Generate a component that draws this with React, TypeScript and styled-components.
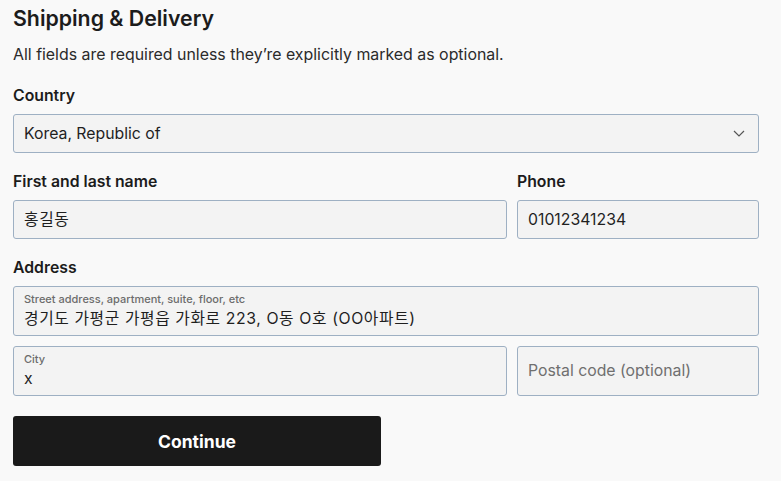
import React from "react";
import styled, { createGlobalStyle } from "styled-components";

const GlobalStyle = createGlobalStyle`
  html, body {
    margin: 0;
    padding: 0;
    background: #f9f9f9;
  }
  body {
    font-family: Inter, "Noto Sans CJK KR", "Noto Sans", sans-serif;
    color: #1c1c1c;
  }
`;

const Page = styled.div`
  width: 746px;
  padding: 6px 0 0 13px;
`;

const Title = styled.h1`
  margin: 0;
  font-size: 21.3px;
  line-height: 24px;
  font-weight: 600;
`;

const Note = styled.p`
  margin: 15px 0 0;
  font-size: 15.9px;
  line-height: 20px;
  color: #2b2b2b;
`;

const Section = styled.div<{ $top: number }>`
  margin-top: ${(p) => p.$top}px;
`;

const Row = styled.div`
  display: grid;
  grid-template-columns: 494px 242px;
  column-gap: 10px;
`;

const Label = styled.div`
  font-size: 15.8px;
  line-height: 20px;
  font-weight: 600;
  margin-bottom: 8px;
`;

const Box = styled.div<{ $tall?: boolean }>`
  box-sizing: border-box;
  height: ${(p) => (p.$tall ? 50 : 39)}px;
  border: 1px solid #9eb0c3;
  border-radius: 3px;
  background: #f3f3f3;
  padding: 0 10px;
  display: flex;
  flex-direction: column;
  justify-content: center;
`;

const SelectBox = styled(Box)`
  flex-direction: row;
  align-items: center;
  justify-content: space-between;
  padding-right: 13px;
`;

const Value = styled.span<{ $muted?: boolean; $ko?: boolean }>`
  font-size: 15.8px;
  line-height: 20px;
  letter-spacing: ${(p) => (p.$ko ? "0.6px" : "0")};
  color: ${(p) => (p.$muted ? "#6f6f6f" : "#1f1f1f")};
`;

const Tiny = styled.span`
  font-size: 11px;
  line-height: 13px;
  font-weight: 500;
  color: #6c6c6c;
  margin-bottom: 3px;
`;

const Stack = styled.div`
  display: flex;
  flex-direction: column;
  gap: 10px;
`;

const Button = styled.button`
  margin-top: 20px;
  width: 368px;
  height: 50px;
  border: none;
  border-radius: 3px;
  background: #1a1a1a;
  color: #fff;
  font-family: Inter, sans-serif;
  font-size: 17.5px;
  font-weight: 700;
  cursor: pointer;
`;

function Chevron() {
  return (
    <svg width="12" height="7" viewBox="0 0 12 7" fill="none">
      <path d="M1 1l5 5 5-5" stroke="#555" strokeWidth="1.2" />
    </svg>
  );
}

export default function App() {
  return (
    <>
      <GlobalStyle />
      <Page>
        <Title>Shipping &amp; Delivery</Title>
        <Note>All fields are required unless they’re explicitly marked as optional.</Note>

        <Section $top={21}>
          <Label>Country</Label>
          <SelectBox>
            <Value>Korea, Republic of</Value>
            <Chevron />
          </SelectBox>
        </Section>

        <Section $top={19}>
          <Row>
            <div>
              <Label>First and last name</Label>
              <Box>
                <Value $ko>홍길동</Value>
              </Box>
            </div>
            <div>
              <Label>Phone</Label>
              <Box>
                <Value>01012341234</Value>
              </Box>
            </div>
          </Row>
        </Section>

        <Section $top={19}>
          <Label>Address</Label>
          <Stack>
            <Box $tall>
              <Tiny>Street address, apartment, suite, floor, etc</Tiny>
              <Value $ko>경기도 가평군 가평읍 가화로 223, O동 O호 (OO아파트)</Value>
            </Box>
            <Row>
              <Box $tall>
                <Tiny>City</Tiny>
                <Value>x</Value>
              </Box>
              <Box $tall>
                <Value $muted>Postal code (optional)</Value>
              </Box>
            </Row>
          </Stack>
        </Section>

        <Button>Continue</Button>
      </Page>
    </>
  );
}
